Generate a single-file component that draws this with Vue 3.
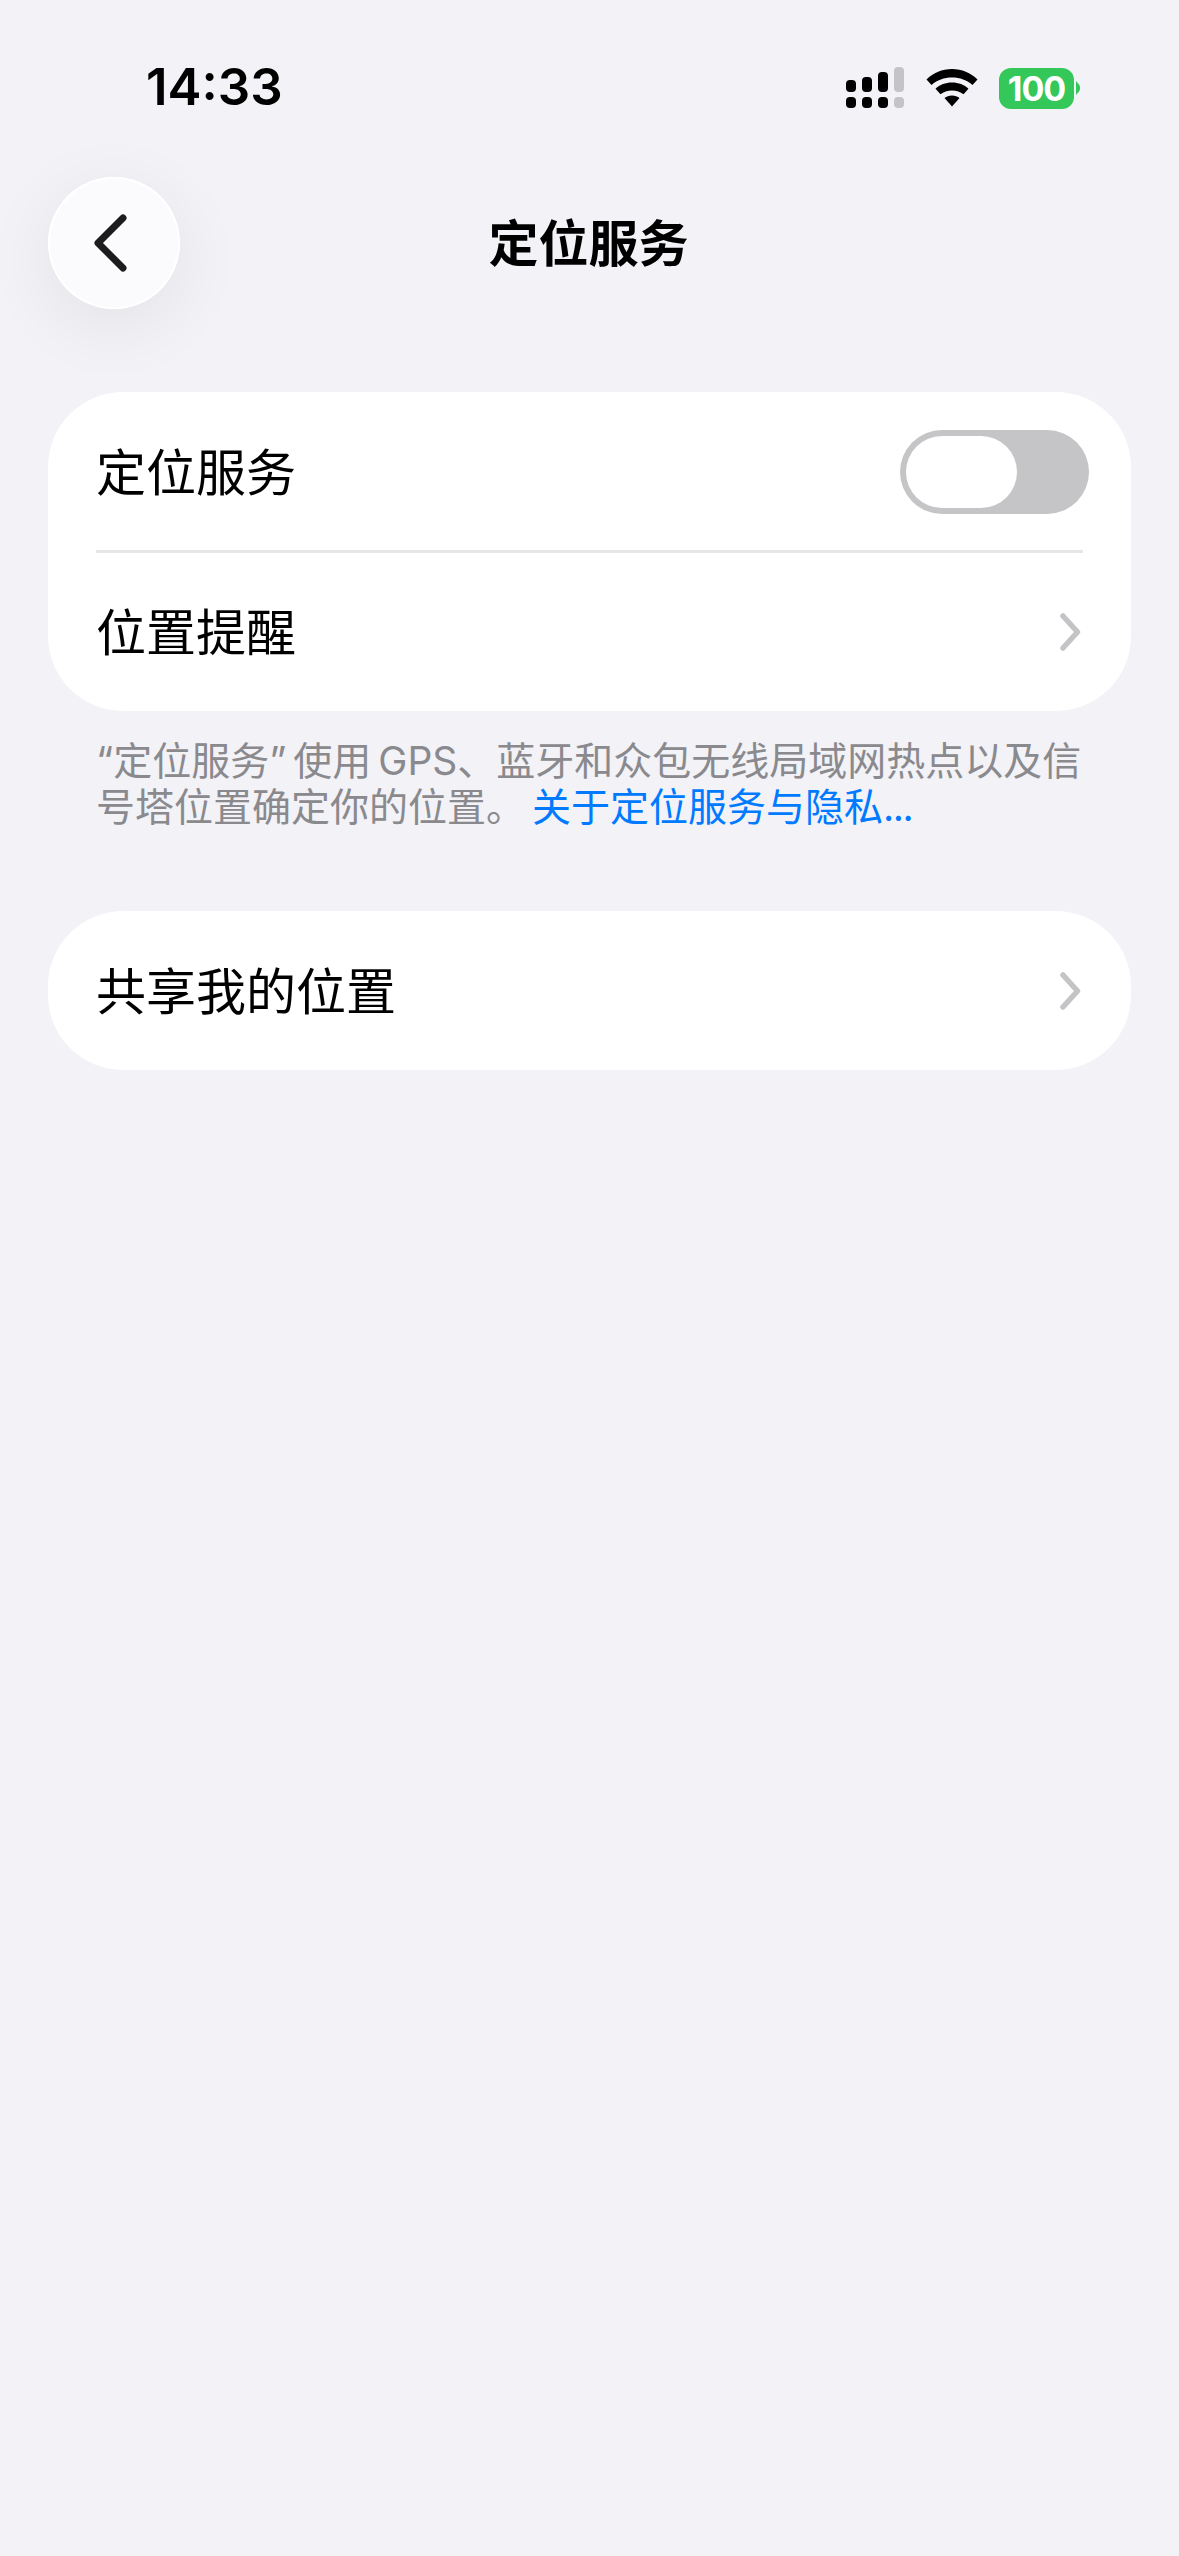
<template>
  <div class="page">
    <div class="status-bar">
      <span class="time">14:33</span>
      <div class="status-icons">
        <svg class="signal" width="58" height="42" viewBox="0 0 58 42">
          <rect x="0" y="13" width="10" height="12" rx="4" fill="#000" />
          <rect x="16" y="10" width="10" height="15" rx="4" fill="#000" />
          <rect x="32" y="5" width="10" height="20" rx="4" fill="#000" />
          <rect x="48" y="0" width="10" height="25" rx="4" fill="#c4c4c8" />
          <rect x="0" y="30" width="10" height="11" rx="4" fill="#000" />
          <rect x="16" y="30" width="10" height="11" rx="4" fill="#000" />
          <rect x="32" y="30" width="10" height="11" rx="4" fill="#000" />
          <rect x="48" y="30" width="10" height="11" rx="4" fill="#c4c4c8" />
        </svg>
        <svg class="wifi" width="52" height="38" viewBox="0 0 52 38">
          <path d="M26 0C16 0 7.500 3.800 0.500 10.500L5.500 16C11 11 18 8.500 26 8.500C34 8.500 41 11 46.500 16L51.500 10.500C44.500 3.800 36 0 26 0Z" fill="#000" />
          <path d="M26 13.500C19.500 13.500 13.800 15.700 9.500 19.800L14.500 25.300C17.500 22.800 21.500 21.500 26 21.500C30.500 21.500 34.500 22.800 37.500 25.300L42.500 19.800C38.200 15.700 32.500 13.500 26 13.500Z" fill="#000" />
          <path d="M26 26.500C23 26.500 20.500 27.400 18.500 29L26 37.500L33.500 29C31.500 27.400 29 26.500 26 26.500Z" fill="#000" />
        </svg>
        <div class="battery">
          <span class="battery-body">100</span>
          <svg class="battery-tip" width="5" height="14" viewBox="0 0 5 14">
            <path d="M0 0L3 3.500C4.600 5.500 4.600 8.500 3 10.500L0 14Z" fill="#34c759" />
          </svg>
        </div>
      </div>
    </div>

    <div class="nav">
      <button class="back">
        <svg width="38" height="60" viewBox="0 0 38 60">
          <path d="M31 5L6 30L31 55" fill="none" stroke="#1c1c1e" stroke-width="7" stroke-linecap="round" stroke-linejoin="round" />
        </svg>
      </button>
      <h1 class="title">定位服务</h1>
    </div>

    <div class="card">
      <div class="row">
        <span>定位服务</span>
        <div class="switch"><div class="knob"></div></div>
      </div>
      <div class="divider"></div>
      <div class="row">
        <span>位置提醒</span>
        <svg class="chevron" width="25" height="40" viewBox="0 0 25 40">
          <path d="M7 4L21.500 20L7 36" fill="none" stroke="#c4c4c7" stroke-width="5.500" stroke-linecap="round" stroke-linejoin="round" />
        </svg>
      </div>
    </div>

    <p class="note">“定位服务” 使用 GPS、蓝牙和众包无线局域网热点以及信<br />号塔位置确定你的位置。 <span class="link">关于定位服务与隐私<span class="dots">...</span></span></p>

    <div class="card">
      <div class="row">
        <span>共享我的位置</span>
        <svg class="chevron" width="25" height="40" viewBox="0 0 25 40">
          <path d="M7 4L21.500 20L7 36" fill="none" stroke="#c4c4c7" stroke-width="5.500" stroke-linecap="round" stroke-linejoin="round" />
        </svg>
      </div>
    </div>
  </div>
</template>

<script setup>
</script>

<style>
body {
  background: #f2f2f7;
}
</style>

<style scoped>
.page {
  width: 1179px;
  height: 2556px;
  overflow: hidden;
  background: #f2f2f7;
  font-family: "Inter", "Noto Sans CJK SC", sans-serif;
  color: #000;
}
.status-bar {
  height: 177px;
  box-sizing: border-box;
  padding: 60px 98px 0 146px;
  display: flex;
  justify-content: space-between;
  align-items: flex-start;
}
.time {
  font-size: 51px;
  font-weight: 600;
  line-height: 54px;
  font-family: "Inter", sans-serif;
}
.status-icons {
  display: flex;
  align-items: center;
  gap: 22px;
  margin-top: 7px;
}
.battery {
  display: flex;
  align-items: center;
  gap: 2px;
  margin-left: -1px;
}
.battery-body {
  width: 75px;
  height: 41px;
  border-radius: 12px;
  background: #34c759;
  color: #fff;
  font-size: 34px;
  font-weight: 700;
  line-height: 41px;
  letter-spacing: -1px;
  text-align: center;
  font-family: "Inter", sans-serif;
}
.nav {
  position: relative;
  height: 132px;
  margin: 0 48px 83px;
  display: flex;
  align-items: center;
  justify-content: center;
}
.back {
  position: absolute;
  left: 0;
  top: 0;
  width: 132px;
  height: 132px;
  padding: 0 7px 0 0;
  border: 0;
  border-radius: 50%;
  background: #fbfbfe;
  box-shadow: 0 16px 72px rgba(0, 0, 0, 0.07), inset 0 0 0 2px #fff;
  display: flex;
  align-items: center;
  justify-content: center;
}
.title {
  margin: 2px 2px 0 0;
  font-size: 50px;
  font-weight: 700;
  line-height: 70px;
}
.card {
  margin: 0 48px;
  background: #fff;
  border-radius: 75px;
}
.row {
  height: 159px;
  box-sizing: border-box;
  padding: 0 50px 0 48px;
  display: flex;
  align-items: center;
  justify-content: space-between;
  font-size: 50px;
  line-height: 70px;
}
.row span {
  padding-top: 2px;
}
.divider {
  height: 3px;
  margin: -1px 48px -1px 48px;
  background: #e6e6e8;
}
.switch {
  width: 189px;
  height: 84px;
  margin-right: -8px;
  box-sizing: border-box;
  padding: 6px;
  border-radius: 42px;
  background: #c5c5c7;
}
.knob {
  width: 111px;
  height: 72px;
  border-radius: 36px;
  background: #fff;
}
.note {
  margin: 27px 48px 0 96px;
  height: 173px;
  font-size: 39px;
  line-height: 46px;
  word-spacing: -4px;
  color: #8a8a8e;
  white-space: nowrap;
}
.link {
  color: #007aff;
}
.dots {
  letter-spacing: -1.500px;
}
</style>
